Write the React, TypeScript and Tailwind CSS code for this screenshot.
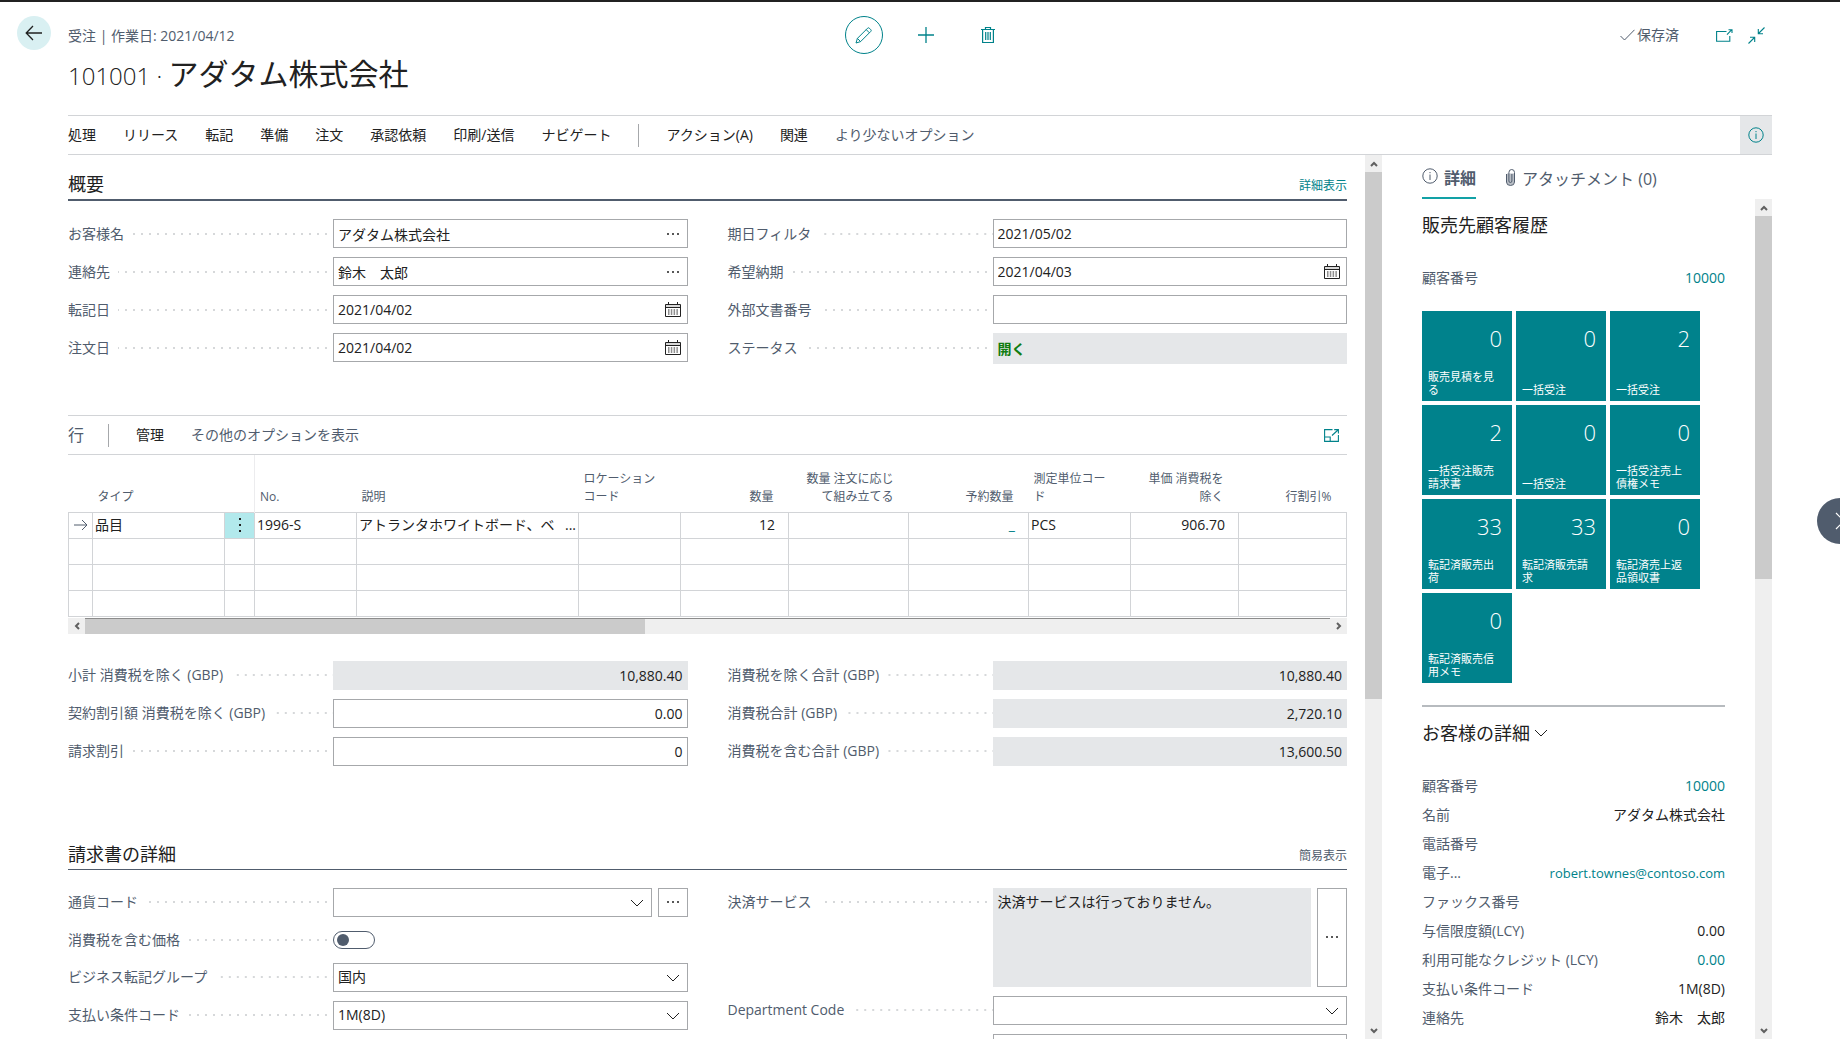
import React, { useState } from 'react';
import clsx from 'clsx';

type FieldKind = 'text' | 'lookup' | 'date' | 'readonly' | 'select' | 'selectMore';

interface FieldProps {
  id: string;
  label: string;
  value?: string;
  kind?: FieldKind;
  alignRight?: boolean;
}

const menuItems = ['処理', 'リリース', '転記', '準備', '注文', '承認依頼', '印刷/送信', 'ナビゲート'];

const columns = [
  { label: 'タイプ', right: false },
  { label: '', right: false },
  { label: 'No.', right: false },
  { label: '説明', right: false },
  { label: 'ロケーションコード', right: false },
  { label: '数量', right: true },
  { label: '数量 注文に応じて組み立てる', right: true },
  { label: '予約数量', right: true },
  { label: '測定単位コード', right: false },
  { label: '単価 消費税を除く', right: true },
  { label: '行割引%', right: true },
];

const tiles = [
  { count: 0, label: '販売見積を見る' },
  { count: 0, label: '一括受注' },
  { count: 2, label: '一括受注' },
  { count: 2, label: '一括受注販売請求書' },
  { count: 0, label: '一括受注' },
  { count: 0, label: '一括受注売上債権メモ' },
  { count: 33, label: '転記済販売出荷' },
  { count: 33, label: '転記済販売請求' },
  { count: 0, label: '転記済売上返品領収書' },
  { count: 0, label: '転記済販売信用メモ' },
];

const customerDetails = [
  { label: '顧客番号', value: '10000', link: true },
  { label: '名前', value: 'アダタム株式会社', link: false },
  { label: '電話番号', value: '', link: false },
  { label: '電子...', value: 'robert.townes@contoso.com', link: true },
  { label: 'ファックス番号', value: '', link: false },
  { label: '与信限度額(LCY)', value: '0.00', link: false },
  { label: '利用可能なクレジット (LCY)', value: '0.00', link: true },
  { label: '支払い条件コード', value: '1M(8D)', link: false },
  { label: '連絡先', value: '鈴木　太郎', link: false },
];

function InfoIcon() {
  return (
    <svg width="16" height="16" viewBox="0 0 16 16" fill="none" stroke="currentColor">
      <circle cx="8" cy="8" r="7.2" />
      <path d="M8 6.5V12M8 4v1.2" />
    </svg>
  );
}

function CalendarIcon() {
  return (
    <svg width="16" height="15" viewBox="0 0 16 15" fill="none" stroke="currentColor">
      <path d="M.5 2.5h15v12H.5zM.5 5.5h15M3.5 0v3M12.5 0v3" />
      <path d="M.5 4h15" strokeOpacity=".35" />
      <path d="M3 8h10M3 10h10M3 12h10" strokeDasharray="1.5 1.3" />
    </svg>
  );
}

function DotsIcon() {
  return (
    <svg width="14" height="4" viewBox="0 0 14 4" fill="currentColor">
      <circle cx="2" cy="2" r="1" />
      <circle cx="7" cy="2" r="1" />
      <circle cx="12" cy="2" r="1" />
    </svg>
  );
}

function ChevronDown({ className }: { className?: string }) {
  return (
    <svg className={className} width="14" height="8" viewBox="0 0 14 8" fill="none" stroke="currentColor">
      <path d="M1 1l6 6 6-6" />
    </svg>
  );
}

// Small arrow used at the ends of the scroll bars
function ScrollArrow({ d }: { d: string }) {
  return (
    <svg width="8" height="8" viewBox="0 0 8 8" fill="none" stroke="#606060" strokeWidth="2">
      <path d={d} />
    </svg>
  );
}

function VerticalScrollbar({ thumb }: { thumb: string }) {
  return (
    <div className="flex w-[17px] shrink-0 flex-col items-center bg-[#efefef]">
      <div className="flex h-[17px] items-center">
        <ScrollArrow d="M1 6l3-3 3 3" />
      </div>
      <div className="flex w-full flex-1 flex-col">
        <div className={clsx('w-full bg-[#cbcbcb]', thumb)} />
      </div>
      <div className="flex h-[17px] items-center">
        <ScrollArrow d="M1 2l3 3 3-3" />
      </div>
    </div>
  );
}

function FieldLabel({ id, label }: { id: string; label: string }) {
  return (
    <div className="flex h-[29px] w-[265px] shrink-0 items-center text-[#505c6d]">
      <label htmlFor={id} className="whitespace-nowrap">
        {label}
      </label>
      <span className="ml-2 h-[2px] flex-1 bg-[linear-gradient(90deg,#d6d8da_2px,transparent_2px)] bg-[length:8px_2px] bg-right bg-repeat-x" />
    </div>
  );
}

function Field({ id, label, value = '', kind = 'text', alignRight = false }: FieldProps) {
  if (kind === 'select' || kind === 'selectMore') {
    return (
      <div className="flex">
        <FieldLabel id={id} label={label} />
        <div className="flex min-w-0 flex-1 gap-[6px]">
          <div className="relative h-[29px] flex-1 border border-[#a6a8ab]">
            <select id={id} defaultValue={value} className="h-full w-full appearance-none bg-white px-1 outline-none">
              <option value={value}>{value}</option>
            </select>
            <ChevronDown className="pointer-events-none absolute top-[10px] right-[7px]" />
          </div>
          {kind === 'selectMore' && (
            <button
              type="button"
              aria-label="参照"
              className="flex w-[30px] items-center justify-center border border-[#a6a8ab]"
            >
              <DotsIcon />
            </button>
          )}
        </div>
      </div>
    );
  }

  return (
    <div className="flex">
      <FieldLabel id={id} label={label} />
      <div
        className={clsx(
          'flex h-[29px] min-w-0 flex-1 items-center border',
          kind === 'readonly' ? 'border-[#e5e7e9] bg-[#e5e7e9]' : 'border-[#a6a8ab] bg-white'
        )}
      >
        <input
          id={id}
          type="text"
          defaultValue={value}
          readOnly={kind === 'readonly'}
          className={clsx('h-full min-w-0 flex-1 bg-transparent px-1 outline-none', alignRight && 'text-right')}
        />
        {kind === 'lookup' && (
          <button type="button" aria-label="参照" className="mr-[7px]">
            <DotsIcon />
          </button>
        )}
        {kind === 'date' && (
          <button type="button" aria-label="カレンダー" className="mr-[6px]">
            <CalendarIcon />
          </button>
        )}
      </div>
    </div>
  );
}

function Header() {
  return (
    <header className="grid grid-cols-[1fr_auto_1fr] items-start px-[17px] pt-[14px]">
      <div className="flex">
        <button
          type="button"
          aria-label="戻る"
          className="mr-[17px] flex size-[34px] items-center justify-center rounded-full bg-[#d9f0f2]"
        >
          <svg width="18" height="16" viewBox="0 0 18 16" fill="none" stroke="#212121" strokeWidth="1.3">
            <path d="M17 8H1.5M8 1L1.2 8 8 15" />
          </svg>
        </button>
        <div className="pt-[10px]">
          <p className="leading-5 text-[#505c6d]">受注 | 作業日: 2021/04/12</p>
          <h1 className="mt-[10px] text-[30px] leading-9 whitespace-nowrap">
            <span className="text-2xl leading-9 font-light">101001 · </span>アダタム株式会社
          </h1>
        </div>
      </div>

      <div className="flex items-center gap-6 pl-[11px] text-[#00828a]">
        <button
          type="button"
          aria-label="編集"
          className="flex size-[38px] items-center justify-center rounded-full border border-[#00828a]"
        >
          <svg width="17" height="17" viewBox="0 0 17 17" fill="none" stroke="currentColor">
            <path d="M1 16l1.4-4.6L12.6 1.2a1.2 1.2 0 0 1 1.7 0l1.5 1.5a1.2 1.2 0 0 1 0 1.7L5.6 14.6zM2.4 11.4l3.2 3.2M11.2 2.6l3.2 3.2" />
          </svg>
        </button>
        <button type="button" aria-label="新規" className="flex w-[38px] justify-center">
          <svg width="16" height="16" viewBox="0 0 16 16" fill="none" stroke="currentColor" strokeWidth="1.3">
            <path d="M8 0v16M0 8h16" />
          </svg>
        </button>
        <button type="button" aria-label="削除" className="flex w-[38px] justify-center">
          <svg width="14" height="16" viewBox="0 0 14 16" fill="none" stroke="currentColor" strokeWidth="1.2">
            <path d="M0 2.5h14M4.5 2.5v-2h5v2M1.6 2.5v13h10.8v-13M4.7 5v8M7 5v8M9.3 5v8" />
          </svg>
        </button>
      </div>

      <div className="flex h-[38px] items-center justify-end pr-[58px] text-[#00828a]">
        <span className="flex items-center gap-[2px] text-[#505c6d]">
          <svg width="15" height="12" viewBox="0 0 15 12" fill="none" stroke="currentColor">
            <path d="M.5 7l4 4L14.5.8" />
          </svg>
          保存済
        </span>
        <button type="button" aria-label="新しいウィンドウで開く" className="ml-[37px]">
          <svg width="17" height="13" viewBox="0 0 17 13" fill="none" stroke="currentColor" strokeWidth="1.1">
            <path d="M10.5 2.5H.6v9.8h13.2V7M11 5.7l4.8-5M12.5.7h3.5V4" />
          </svg>
        </button>
        <button type="button" aria-label="縮小" className="ml-[15px]">
          <svg width="17" height="17" viewBox="0 0 17 17" fill="none" stroke="currentColor" strokeWidth="1.1">
            <path d="M16.5.5l-6 6M10.3 2v4.7H15M.5 16.5l6-6M2 10.3h4.7V15" />
          </svg>
        </button>
      </div>
    </header>
  );
}

function ActionBar() {
  return (
    <nav className="mx-[68px] mt-[21px] flex h-10 shrink-0 items-center border-y border-[#d2d4d7]">
      <div className="flex flex-1 items-center gap-[27px] whitespace-nowrap">
        {menuItems.map((item) => (
          <button key={item} type="button">
            {item}
          </button>
        ))}
        <span className="h-[23px] border-l border-[#a6a8ab]" />
        <button type="button">アクション(A)</button>
        <button type="button">関連</button>
        <button type="button" className="text-[#505c6d]">
          より少ないオプション
        </button>
      </div>
      <button
        type="button"
        aria-label="情報"
        className="flex h-full w-8 items-center justify-center bg-[#e5e7e9] text-[#00828a]"
      >
        <InfoIcon />
      </button>
    </nav>
  );
}

function LinesTable() {
  const cell = 'h-[26px] border border-[#d2d4d7] p-0';

  return (
    <div>
      <table className="w-full table-fixed border-collapse">
        <colgroup>
          <col className="w-[24px]" />
          <col className="w-[132px]" />
          <col className="w-[30px]" />
          <col className="w-[102px]" />
          <col />
          <col className="w-[102px]" />
          <col className="w-[108px]" />
          <col className="w-[120px]" />
          <col className="w-[120px]" />
          <col className="w-[102px]" />
          <col className="w-[108px]" />
          <col className="w-[108px]" />
        </colgroup>
        <thead>
          <tr className="h-[57px] text-xs leading-[18px] text-[#505c6d]">
            <th />
            {columns.map((col, i) => (
              <th
                key={i}
                className={clsx(
                  'pb-[6px] align-bottom font-normal',
                  col.right ? 'pr-[15px] pl-[14px] text-right' : 'pr-5 pl-[5px] text-left',
                  i === 1 && 'border-r border-[#ececee]'
                )}
              >
                {col.label}
              </th>
            ))}
          </tr>
        </thead>
        <tbody>
          <tr>
            <td className={cell}>
              <svg className="mx-auto" width="14" height="12" viewBox="0 0 14 12" fill="none" stroke="#505c6d">
                <path d="M0 6h13M8 1l5 5-5 5" />
              </svg>
            </td>
            <td className={clsx(cell, 'pl-[2px]')}>品目</td>
            <td className={clsx(cell, 'bg-[#b2e9ec]')}>
              <button type="button" aria-label="行オプション" className="flex w-full justify-center">
                <svg width="4" height="16" viewBox="0 0 4 16" fill="#212121">
                  <path d="M1 1h2v2H1zM1 7h2v2H1zM1 13h2v2H1z" />
                </svg>
              </button>
            </td>
            <td className={clsx(cell, 'pl-[2px]')}>1996-S</td>
            <td className={clsx(cell, 'pl-[2px]')}>
              <div className="flex justify-between pr-[2px] whitespace-nowrap">
                <span>アトランタホワイトボード、ベ</span>
                <span>...</span>
              </div>
            </td>
            <td className={cell} />
            <td className={clsx(cell, 'pr-[13px] text-right')}>12</td>
            <td className={cell} />
            <td className={clsx(cell, 'pr-[13px] text-right text-[#00828a]')}>
              <a href="#reserved">_</a>
            </td>
            <td className={clsx(cell, 'pl-[2px]')}>PCS</td>
            <td className={clsx(cell, 'pr-[13px] text-right')}>906.70</td>
            <td className={cell} />
          </tr>
          {[1, 2, 3].map((row) => (
            <tr key={row}>
              <td className={cell} />
              {columns.map((_, i) => (
                <td key={i} className={cell} />
              ))}
            </tr>
          ))}
        </tbody>
      </table>
      <div className="mt-px flex h-4 items-center bg-[#efefef]">
        <div className="flex w-[17px] justify-center">
          <ScrollArrow d="M6 1L3 4l3 3" />
        </div>
        <div className="h-full flex-1 border-t border-[#8c8c8c]">
          <div className="h-full w-[45%] bg-[#cbcbcb]" />
        </div>
        <div className="flex w-[17px] justify-center">
          <ScrollArrow d="M2 1l3 3-3 3" />
        </div>
      </div>
    </div>
  );
}

function FactBox() {
  return (
    <aside className="flex w-[390px] shrink-0 flex-col pl-10">
      <div className="flex h-[44px] shrink-0 items-stretch gap-[30px] text-base text-[#505c6d]">
        <button type="button" className="flex items-center gap-[6px] border-b-2 border-[#12a1a6] font-bold">
          <InfoIcon />
          <span className="pt-1">詳細</span>
        </button>
        <button type="button" className="flex items-center gap-[7px]">
          <svg width="9" height="17" viewBox="0 0 9 17" fill="none" stroke="currentColor">
            <path d="M1 4.5h7v9a3.5 2.8 0 0 1-7 0z" fill="currentColor" fillOpacity=".4" stroke="none" />
            <path d="M.5 5v8a4 3.5 0 0 0 8 0V3.5a2.8 3 0 0 0-5.6 0V12a1.5 1.5 0 0 0 3 0V5" />
          </svg>
          <span className="pt-1">アタッチメント (0)</span>
        </button>
      </div>

      <div className="flex min-h-0 flex-1">
        <div className="min-w-0 flex-1 overflow-hidden pr-[30px]">
          <h2 className="mt-3 text-lg leading-7">販売先顧客履歴</h2>
          <div className="mt-6 flex h-[29px] items-center justify-between">
            <span className="text-[#505c6d]">顧客番号</span>
            <a href="#customer" className="text-[#00828a]">
              10000
            </a>
          </div>
          <div className="mt-[19px] flex flex-wrap gap-1">
            {tiles.map((tile, i) => (
              <a
                key={i}
                href="#tile"
                className="flex size-[90px] flex-col justify-between bg-[#00828c] pt-3 pb-[5px] pl-[6px] text-white"
              >
                <span className="pr-[10px] text-right text-[22px] leading-[30px] font-light">{tile.count}</span>
                <span className="pr-4 text-[11px] leading-[13px]">{tile.label}</span>
              </a>
            ))}
          </div>
          <hr className="mt-[22px] border-t-2 border-[#b7bbbf]" />
          <h2 className="mt-3 text-lg leading-7">
            <button type="button" className="flex items-center gap-1">
              お客様の詳細
              <ChevronDown />
            </button>
          </h2>
          <dl className="mt-6">
            {customerDetails.map((row) => (
              <div key={row.label} className="flex h-[29px] items-center justify-between">
                <dt className="text-[#505c6d]">{row.label}</dt>
                <dd>
                  {row.link ? (
                    <a href="#detail" className={clsx('text-[#00828a]', row.value.includes('@') && 'text-[13px]')}>
                      {row.value}
                    </a>
                  ) : (
                    row.value
                  )}
                </dd>
              </div>
            ))}
          </dl>
        </div>
        <VerticalScrollbar thumb="h-[45%]" />
      </div>
    </aside>
  );
}

export default function App() {
  const [includesVat, setIncludesVat] = useState(false);

  return (
    <div className="relative flex h-screen flex-col overflow-hidden border-t-2 border-[#212121] bg-white font-['Open_Sans','Noto_Sans_CJK_JP',sans-serif] text-sm text-[#212121]">
      <Header />
      <ActionBar />

      <div className="flex min-h-0 flex-1 pr-[68px] pl-[68px]">
        <main className="min-w-0 flex-1 overflow-hidden pr-[18px]">
          {/* General */}
          <section>
            <div className="flex h-[46px] items-end justify-between border-b-2 border-[#505c6d] pb-px">
              <h2 className="text-lg leading-7">概要</h2>
              <button type="button" className="pb-1 text-xs text-[#00828a]">
                詳細表示
              </button>
            </div>
            <div className="mt-[18px] grid grid-cols-2 gap-x-10">
              <div className="flex flex-col gap-[9px]">
                <Field id="customer-name" label="お客様名" value="アダタム株式会社" kind="lookup" />
                <Field id="contact" label="連絡先" value="鈴木　太郎" kind="lookup" />
                <Field id="posting-date" label="転記日" value="2021/04/02" kind="date" />
                <Field id="order-date" label="注文日" value="2021/04/02" kind="date" />
              </div>
              <div className="flex flex-col gap-[9px]">
                <Field id="due-date" label="期日フィルタ" value="2021/05/02" />
                <Field id="requested-date" label="希望納期" value="2021/04/03" kind="date" />
                <Field id="external-doc" label="外部文書番号" />
                <div className="flex">
                  <FieldLabel id="status" label="ステータス" />
                  <output
                    id="status"
                    className="flex h-[31px] flex-1 items-center bg-[#e5e7e9] px-[5px] font-bold text-[#107c10]"
                  >
                    開く
                  </output>
                </div>
              </div>
            </div>
          </section>

          {/* Lines */}
          <section className="mt-[51px]">
            <div className="flex h-10 items-center border-y border-[#d2d4d7]">
              <h2 className="text-base text-[#505c6d]">行</h2>
              <span className="ml-6 h-[23px] border-l border-[#a6a8ab]" />
              <button type="button" className="ml-[27px]">
                管理
              </button>
              <button type="button" className="ml-[27px] flex-1 text-left text-[#505c6d]">
                その他のオプションを表示
              </button>
              <button type="button" aria-label="フォーカスモード" className="mr-[8px] text-[#00828a]">
                <svg width="15" height="13" viewBox="0 0 15 13" fill="none" stroke="currentColor" strokeWidth="1.1">
                  <path d="M8.5.6H.6v11.8h13.8V6M.6 8h5.6v4.4M8 6.5l6-5.5M10.2.6h4.2v4" />
                </svg>
              </button>
            </div>
            <LinesTable />
          </section>

          {/* Totals */}
          <section className="mt-[27px] grid grid-cols-2 gap-x-10">
            <div className="flex flex-col gap-[9px]">
              <Field id="subtotal" label="小計 消費税を除く (GBP)" value="10,880.40" kind="readonly" alignRight />
              <Field id="discount-amount" label="契約割引額 消費税を除く (GBP)" value="0.00" alignRight />
              <Field id="discount-percent" label="請求割引" value="0" alignRight />
            </div>
            <div className="flex flex-col gap-[9px]">
              <Field id="total-excl" label="消費税を除く合計 (GBP)" value="10,880.40" kind="readonly" alignRight />
              <Field id="total-vat" label="消費税合計 (GBP)" value="2,720.10" kind="readonly" alignRight />
              <Field id="total-incl" label="消費税を含む合計 (GBP)" value="13,600.50" kind="readonly" alignRight />
            </div>
          </section>

          {/* Invoice details */}
          <section className="mt-[58px]">
            <div className="flex h-[46px] items-end justify-between border-b border-[#505c6d] pb-px">
              <h2 className="text-lg leading-7">請求書の詳細</h2>
              <button type="button" className="pb-1 text-xs text-[#505c6d]">
                簡易表示
              </button>
            </div>
            <div className="mt-[18px] grid grid-cols-2 gap-x-10">
              <div className="flex flex-col gap-[9px]">
                <Field id="currency" label="通貨コード" kind="selectMore" />
                <div className="flex h-[28px] items-center">
                  <FieldLabel id="vat-included" label="消費税を含む価格" />
                  <input
                    id="vat-included"
                    type="checkbox"
                    role="switch"
                    checked={includesVat}
                    onChange={(e) => setIncludesVat(e.target.checked)}
                    className="flex h-[18px] w-[42px] appearance-none items-center rounded-full border border-[#505c6d] px-[3px] before:size-3 before:rounded-full before:bg-[#505c6d] checked:justify-end"
                  />
                </div>
                <Field id="business-group" label="ビジネス転記グループ" value="国内" kind="select" />
                <Field id="payment-terms" label="支払い条件コード" value="1M(8D)" kind="select" />
                <Field id="payment-method" label="" kind="select" />
              </div>
              <div className="flex flex-col gap-[9px]">
                <div className="flex">
                  <FieldLabel id="payment-service" label="決済サービス" />
                  <textarea
                    id="payment-service"
                    readOnly
                    defaultValue="決済サービスは行っておりません。"
                    className="h-[99px] min-w-0 flex-1 resize-none bg-[#e5e7e9] px-[5px] py-1 outline-none"
                  />
                  <button
                    type="button"
                    aria-label="参照"
                    className="ml-[6px] flex w-[30px] items-center justify-center border border-[#a6a8ab]"
                  >
                    <DotsIcon />
                  </button>
                </div>
                <Field id="department" label="Department Code" kind="select" />
                <Field id="project" label="" kind="select" />
              </div>
            </div>
          </section>
        </main>
        <VerticalScrollbar thumb="h-[62%]" />
        <FactBox />
      </div>

      {/* Next record, half outside the window */}
      <button
        type="button"
        aria-label="次へ"
        className="absolute top-[496px] -right-[23px] flex size-[46px] items-center justify-center rounded-full bg-[#505c6d] text-white"
      >
        <svg width="10" height="18" viewBox="0 0 10 18" fill="none" stroke="currentColor" strokeWidth="1.2">
          <path d="M1 1l8 8-8 8" />
        </svg>
      </button>
    </div>
  );
}
